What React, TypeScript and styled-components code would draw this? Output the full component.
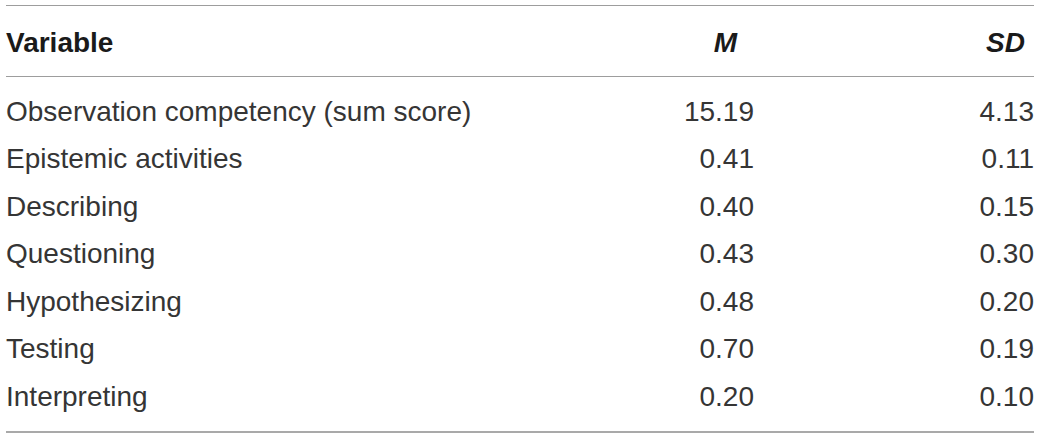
import React from "react";
import styled, { createGlobalStyle, css } from "styled-components";

const GlobalStyle = createGlobalStyle`
  html, body {
    margin: 0;
    padding: 0;
    background: #ffffff;
  }
  body {
    font-family: "Liberation Sans", Arial, Helvetica, sans-serif;
  }
`;

const columns = css`
  display: grid;
  grid-template-columns: minmax(0, 1fr) 80px 280px;
  align-items: baseline;
`;

const Page = styled.div`
  padding: 5px 6px 0 6px;
  width: 1028px;
`;

const Table = styled.div`
  border-top: 1px solid #9d9d9d;
`;

const HeadRow = styled.div`
  ${columns};
  padding: 13px 0 10px;
  border-bottom: 1px solid #9d9d9d;
  font-size: 28px;
  line-height: 47px;
  font-weight: 700;
  color: #1a1a1a;
`;

const HeadCell = styled.div<{ $stat?: "m" | "sd" }>`
  white-space: nowrap;
  ${(p) =>
    p.$stat === "m" &&
    css`
      font-style: italic;
      text-align: center;
      padding-left: 23px;
    `}
  ${(p) =>
    p.$stat === "sd" &&
    css`
      font-style: italic;
      text-align: center;
      justify-self: end;
      width: 57px;
    `}
`;

const Body = styled.div`
  padding: 10.5px 0 11px;
  border-bottom: 2px solid #a9a9a9;
`;

const Row = styled.div`
  ${columns};
  font-size: 28px;
  line-height: 47.5px;
  color: #353535;
`;

const Cell = styled.div<{ $num?: boolean }>`
  white-space: nowrap;
  text-align: ${(p) => (p.$num ? "right" : "left")};
`;

const rows: [string, string, string][] = [
  ["Observation competency (sum score)", "15.19", "4.13"],
  ["Epistemic activities", "0.41", "0.11"],
  ["Describing", "0.40", "0.15"],
  ["Questioning", "0.43", "0.30"],
  ["Hypothesizing", "0.48", "0.20"],
  ["Testing", "0.70", "0.19"],
  ["Interpreting", "0.20", "0.10"],
];

export default function App() {
  return (
    <>
      <GlobalStyle />
      <Page>
        <Table>
          <HeadRow>
            <HeadCell>Variable</HeadCell>
            <HeadCell $stat="m">M</HeadCell>
            <HeadCell $stat="sd">SD</HeadCell>
          </HeadRow>
          <Body>
            {rows.map(([label, m, sd]) => (
              <Row key={label}>
                <Cell>{label}</Cell>
                <Cell $num>{m}</Cell>
                <Cell $num>{sd}</Cell>
              </Row>
            ))}
          </Body>
        </Table>
      </Page>
    </>
  );
}
